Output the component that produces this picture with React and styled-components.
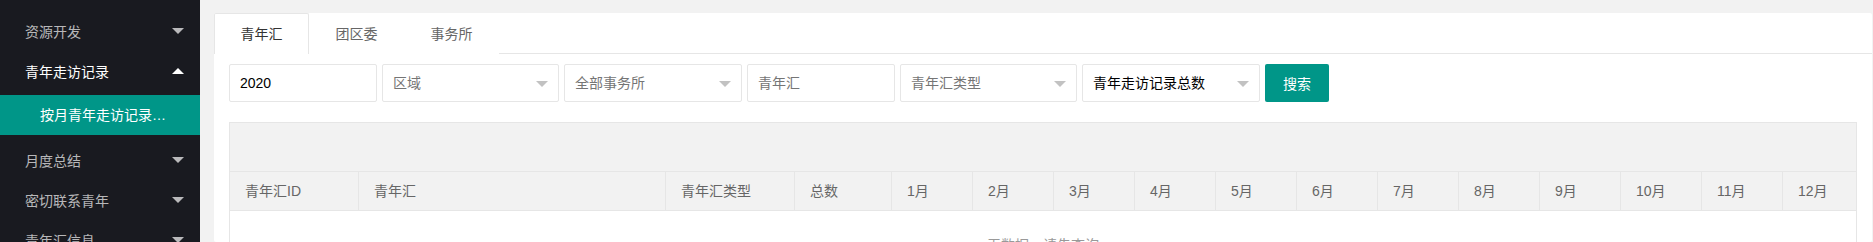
import React from "react";
import styled, { createGlobalStyle } from "styled-components";

const GlobalStyle = createGlobalStyle`
  html, body {
    margin: 0;
    padding: 0;
    height: 242px;
    overflow: hidden;
    font-family: "Liberation Sans", "Noto Sans CJK SC", sans-serif;
    font-size: 14px;
    color: #333;
  }
  * { box-sizing: border-box; }
`;

const Layout = styled.div`
  display: flex;
  height: 242px;
`;

const Side = styled.nav`
  width: 200px;
  flex-shrink: 0;
  background: #191a20;
  padding-top: 11px;
`;

const NavItem = styled.div`
  height: 40px;
  display: flex;
  align-items: center;
  justify-content: space-between;
  padding: 0 16px 0 25px;
  color: ${(p) => (p.$open ? "#fff" : "rgba(255,255,255,.7)")};
  font-size: 14px;
`;

const Arrow = styled.span`
  width: 0;
  height: 0;
  border-left: 6px solid transparent;
  border-right: 6px solid transparent;
  ${(p) =>
    p.$up
      ? "border-bottom: 6px solid #fff;"
      : "border-top: 6px solid rgba(255,255,255,.7);"}
`;

const SubList = styled.div`
  padding: 4px 0 5px;
`;

const SubItem = styled.div`
  height: 40px;
  line-height: 40px;
  padding: 0 30px 0 40px;
  background: #009688;
  color: #fff;
  white-space: nowrap;
  overflow: hidden;
  text-overflow: ellipsis;
`;

const Main = styled.main`
  flex: 1;
  background: #f2f2f2;
  padding: 13px 1px 0 14px;
  min-width: 0;
`;

const Card = styled.section`
  background: #fff;
  border-radius: 2px;
  height: 100%;
`;

const Tabs = styled.ul`
  display: flex;
  margin: 0;
  padding: 0;
  list-style: none;
  height: 41px;
  border-bottom: 1px solid #e6e6e6;
`;

const Tab = styled.li`
  width: 95px;
  height: 41px;
  line-height: 40px;
  text-align: center;
  color: ${(p) => (p.$active ? "#333" : "#666")};
  background: #fff;
  border: 1px solid ${(p) => (p.$active ? "#e6e6e6" : "transparent")};
  border-bottom: none;
  border-radius: 2px 2px 0 0;
  margin-bottom: -1px;
`;

const Content = styled.div`
  padding: 10px 15px 0;
`;

const Filters = styled.div`
  display: flex;
  gap: 5px;
  margin-bottom: 20px;
`;

const Field = styled.div`
  position: relative;
  width: ${(p) => p.$w}px;
  height: 38px;
  line-height: 36px;
  border: 1px solid #e6e6e6;
  border-radius: 2px;
  padding: 0 30px 0 10px;
  color: ${(p) => (p.$value ? "#000" : "#757575")};
  white-space: nowrap;
  background: #fff;
`;

const Caret = styled.span`
  position: absolute;
  right: 10px;
  top: 16px;
  border-left: 6px solid transparent;
  border-right: 6px solid transparent;
  border-top: 6px solid #c2c2c2;
`;

const SearchButton = styled.button`
  width: 64px;
  height: 38px;
  border: none;
  border-radius: 2px;
  background: #009688;
  color: #fff;
  font: inherit;
  font-size: 14px;
`;

const Table = styled.div`
  border: 1px solid #e6e6e6;
  border-bottom: none;
  height: 200px;
`;

const Toolbar = styled.div`
  height: 49px;
  background: #f2f2f2;
  border-bottom: 1px solid #e6e6e6;
`;

const HeadRow = styled.div`
  display: grid;
  grid-template-columns: 129px 307px 129px 97px repeat(11, 81px) 1fr;
  height: 39px;
  background: #f2f2f2;
  border-bottom: 1px solid #e6e6e6;
`;

const Th = styled.div`
  padding: 0 15px;
  line-height: 38px;
  color: #666;
  white-space: nowrap;
  border-right: 1px solid #e6e6e6;
  &:last-child { border-right: none; }
`;

const Empty = styled.div`
  padding-top: 24px;
  line-height: 20px;
  text-align: center;
  color: #999;
`;

const columns = [
  "青年汇ID", "青年汇", "青年汇类型", "总数",
  "1月", "2月", "3月", "4月", "5月", "6月",
  "7月", "8月", "9月", "10月", "11月", "12月",
];

export default function App() {
  return (
    <>
      <GlobalStyle />
      <Layout>
        <Side>
          <NavItem>资源开发<Arrow /></NavItem>
          <NavItem $open>青年走访记录<Arrow $up /></NavItem>
          <SubList>
            <SubItem>按月青年走访记录统计</SubItem>
          </SubList>
          <NavItem>月度总结<Arrow /></NavItem>
          <NavItem>密切联系青年<Arrow /></NavItem>
          <NavItem>青年汇信息<Arrow /></NavItem>
        </Side>
        <Main>
          <Card>
            <Tabs>
              <Tab $active>青年汇</Tab>
              <Tab>团区委</Tab>
              <Tab>事务所</Tab>
            </Tabs>
            <Content>
              <Filters>
                <Field $w={148} $value>2020</Field>
                <Field $w={177}>区域<Caret /></Field>
                <Field $w={178}>全部事务所<Caret /></Field>
                <Field $w={148}>青年汇</Field>
                <Field $w={177}>青年汇类型<Caret /></Field>
                <Field $w={178} $value>青年走访记录总数<Caret /></Field>
                <SearchButton>搜索</SearchButton>
              </Filters>
              <Table>
                <Toolbar />
                <HeadRow>
                  {columns.map((c) => (
                    <Th key={c}>{c}</Th>
                  ))}
                </HeadRow>
                <Empty>无数据，请先查询</Empty>
              </Table>
            </Content>
          </Card>
        </Main>
      </Layout>
    </>
  );
}
